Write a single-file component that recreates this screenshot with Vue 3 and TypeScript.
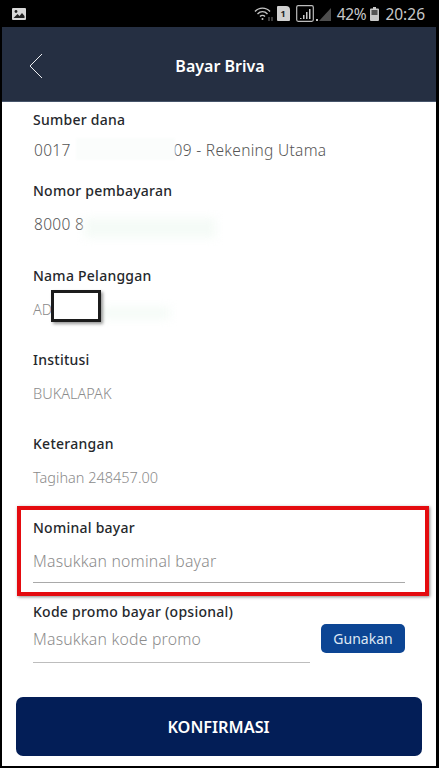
<script setup lang="ts">
const fields = [
  { label: 'Sumber dana', value: '0017', tail: '09 - Rekening Utama', cls: 'f1' },
  { label: 'Nomor pembayaran', value: '8000 8', tail: '', cls: 'f2' },
  { label: 'Nama Pelanggan', value: 'AD', tail: '', cls: 'f3 small' },
  { label: 'Institusi', value: 'BUKALAPAK', tail: '', cls: 'f4 small' },
  { label: 'Keterangan', value: 'Tagihan 248457.00', tail: '', cls: 'f5 small' },
]
</script>

<template>
  <div class="screen">
    <div class="status">
      <svg class="pic" width="14" height="12" viewBox="0 0 14 12">
        <rect x="0" y="0" width="14" height="12" rx="1" fill="#d8d8d8" />
        <circle cx="4" cy="3.5" r="1.4" fill="#222" />
        <path d="M1.5 10 L5.5 6 L7.5 8 L10 5 L12.5 8 V10 Z" fill="#222" />
      </svg>
      <div class="status-right">
        <svg width="20" height="16" viewBox="0 0 20 16" fill="none" stroke="#c4c4c4" stroke-width="1.4">
          <path d="M1 5.5 C5 1 12 1 16 5.5" />
          <path d="M3.5 8 C6.5 5 10.5 5 13.5 8" />
          <path d="M6 10.5 C7.5 9 9.5 9 11 10.5" />
          <circle cx="8.5" cy="13" r="1" fill="#c4c4c4" stroke="none" />
          <path d="M15 11 v4 M18 11 v4" stroke="#777" stroke-width="1" />
        </svg>
        <span class="sim">1</span>
        <svg width="18" height="17" viewBox="0 0 18 17">
          <rect x="0.7" y="0.7" width="16.6" height="15.6" rx="1.5" fill="none" stroke="#bdbdbd" stroke-width="1.2" />
          <path d="M4 13 h1.5 v1 H4 Z M7 10 h1.5 v4 H7 Z M10 7 h1.5 v7 H10 Z M13 4 h1.5 v10 H13 Z" fill="#c9c9c9" />
        </svg>
        <svg class="sig2" width="15" height="14" viewBox="0 0 15 14">
          <path d="M3 14 L15 1 V14 Z" fill="#4e4e4e" />
          <rect x="0" y="12" width="2" height="2" fill="#c4c4c4" />
        </svg>
        <span class="pct">42%</span>
        <svg width="9" height="14" viewBox="0 0 9 14">
          <path d="M3 0 h3 v1.5 h2 a1 1 0 0 1 1 1 V13 a1 1 0 0 1 -1 1 H1 a1 1 0 0 1 -1 -1 V2.5 a1 1 0 0 1 1 -1 h2 Z" fill="#c8c8c8" />
          <rect x="1.5" y="3" width="6" height="5" fill="#555" />
        </svg>
        <span class="clock">20:26</span>
      </div>
    </div>

    <div class="frame">
      <header class="bar">
        <svg class="back" width="14" height="26" viewBox="0 0 14 26" fill="none" stroke="#eef0f3" stroke-width="1">
          <path d="M13 1 L1 13 L13 25" />
        </svg>
        <h1>Bayar Briva</h1>
      </header>

      <main class="body">
        <div v-for="f in fields" :key="f.label" class="field" :class="f.cls">
          <div class="label">{{ f.label }}</div>
          <div class="value">
            <span>{{ f.value }}</span><span v-if="f.tail" class="tail">{{ f.tail }}</span>
          </div>
        </div>

        <div class="entry nominal">
          <div class="label">Nominal bayar</div>
          <div class="input">Masukkan nominal bayar</div>
        </div>

        <div class="promo">
          <div class="label">Kode promo bayar (opsional)</div>
          <div class="promo-row">
            <div class="input">Masukkan kode promo</div>
            <button class="use">Gunakan</button>
          </div>
        </div>

        <button class="confirm">KONFIRMASI</button>

        <!-- annotations drawn on top of the screenshot -->
        <div class="smear s1"></div>
        <div class="smear s2"></div>
        <div class="smear s3"></div>
        <div class="redact"></div>
        <div class="redbox"></div>
      </main>
    </div>
  </div>
</template>

<style scoped>
.screen {
  width: 439px;
  height: 768px;
  background: #000;
  overflow: hidden;
  font-family: "Noto Sans", "Open Sans", sans-serif;
  display: flex;
  flex-direction: column;
}
.status {
  height: 27px;
  display: flex;
  align-items: center;
  justify-content: space-between;
  padding: 0 14px 0 12px;
  color: #c8c8c8;
  flex: none;
}
.status-right {
  display: flex;
  align-items: center;
  gap: 3px;
}
.sim {
  width: 13px;
  height: 15px;
  background: #d0d0d0;
  color: #222;
  font-size: 9px;
  font-weight: 700;
  text-align: center;
  line-height: 15px;
  border-radius: 1px 4px 1px 1px;
  margin-right: 3px;
}
.sig2 {
  margin-left: -1px;
  margin-right: 3px;
}
.pct {
  font-size: 15.5px;
  letter-spacing: -0.3px;
  margin-right: 1px;
}
.clock {
  font-size: 15.5px;
  margin-left: 3px;
}
.frame {
  flex: 1;
  margin: 0 3px 2px 2px;
  display: flex;
  flex-direction: column;
  min-height: 0;
}
.bar {
  height: 74px;
  background: #252f42;
  border-bottom: 1px solid #46546a;
  display: flex;
  align-items: center;
  justify-content: center;
  position: relative;
  flex: none;
}
.back {
  position: absolute;
  left: 27px;
  top: 26px;
}
.bar h1 {
  margin: 4px 0 0 2px;
  font-size: 16px;
  font-weight: 600;
  color: #fff;
}
.body {
  flex: 1;
  background: #fff;
  position: relative;
  padding: 0 14px 0 14px;
  display: flex;
  flex-direction: column;
}
.field {
  padding-left: 17px;
}
.label {
  font-size: 14px;
  font-weight: 500;
  color: #25282c;
  line-height: 20px;
  letter-spacing: 0.25px;
}
.value {
  font-size: 15.5px;
  font-weight: 300;
  color: #555;
  line-height: 22px;
  margin-top: 9px;
  white-space: nowrap;
  letter-spacing: 0.3px;
}
.f1 .value,
.f2 .value {
  padding-left: 1px;
}
.tail {
  margin-left: 103px;
}
.small .value {
  font-size: 14.5px;
  color: #8b8b8b;
  letter-spacing: 0;
}
.f1 { margin-top: 8px; height: 71px; }
.f2 { height: 85px; }
.f2 .value { margin-top: 12px; }
.f3 { height: 84px; }
.f3 .value { margin-top: 12px; }
.f4 { height: 84px; }
.f4 .value { margin-top: 12px; }
.f5 { height: 84px; }
.f5 .value { margin-top: 12px; }
.entry {
  padding: 0 17px;
}
.input {
  font-size: 15.8px;
  font-weight: 300;
  color: #8c8c8c;
  line-height: 22px;
  border-bottom: 1px solid #a9a9a9;
  letter-spacing: 0.2px;
}
.nominal .input {
  margin-top: 12px;
  padding-bottom: 10px;
}
.promo {
  padding: 0 17px;
  margin-top: 19px;
}
.promo .input {
  flex: none;
  width: 277px;
  padding-top: 5px;
  padding-bottom: 12px;
  border-bottom-color: #bdbdbd;
}
.promo-row {
  display: flex;
  justify-content: space-between;
  align-items: flex-start;
  margin-top: 1px;
}
.use {
  width: 84px;
  height: 29px;
  border: none;
  border-radius: 5px;
  background: #0c4594;
  color: #dfe8f4;
  font: 14px "Noto Sans", sans-serif;
  padding: 0;
  margin-top: 1px;
}
.confirm {
  height: 59px;
  width: 406px;
  align-self: center;
  margin: 34px 0 0 -1px;
  border: none;
  border-radius: 7px;
  background: #031e57;
  color: #fff;
  font: 600 16.3px "Noto Sans", sans-serif;
  padding: 0;
}
.smear {
  position: absolute;
  background: #f5fbf7;
  filter: blur(5px);
}
.s1 { left: 74px; top: 36px; width: 99px; height: 22px; background: #fbfdfc; filter: blur(1px); }
.s2 { left: 82px; top: 116px; width: 132px; height: 20px; }
.s3 { left: 98px; top: 205px; width: 70px; height: 12px; }
.redact {
  position: absolute;
  left: 49px;
  top: 188px;
  width: 50px;
  height: 32px;
  box-sizing: border-box;
  background: #fff;
  border: 3px solid #1c1c1c;
  box-shadow: 2px 2px 3px rgba(0, 0, 0, 0.4);
}
.redbox {
  position: absolute;
  left: 15px;
  top: 404px;
  width: 412px;
  height: 90px;
  box-sizing: border-box;
  border: 4px solid #e40b0f;
  box-shadow: 1px 1px 3px rgba(0, 0, 0, 0.45);
}
</style>

<style>
body { background: #000; }
</style>
